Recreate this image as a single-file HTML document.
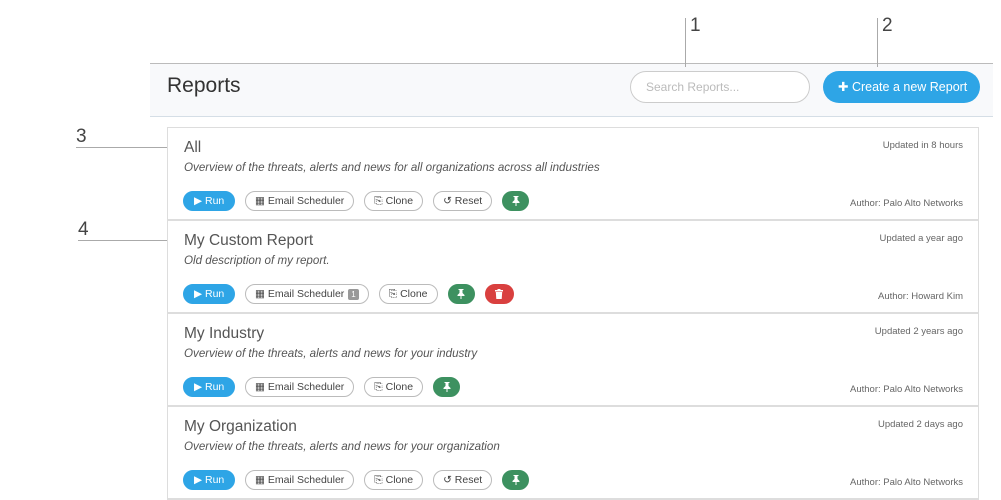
<!DOCTYPE html>
<html><head><style>
*{box-sizing:border-box;margin:0;padding:0}
body{width:1001px;height:497px;background:#fff;font-family:"Liberation Sans",sans-serif;position:relative;overflow:hidden;color:#555}
.a{position:absolute}
.hdr{left:150px;top:63px;width:843px;height:54px;background:#f8f9fb;border-top:1px solid #bbb;border-bottom:1px solid #d5dee6}
.card{left:167px;width:812px;height:94px;border:1px solid #ddd;border-bottom:2px solid #ddd;background:#fff}
.t{left:16px;top:11px;font-size:15.5px;color:#555}
.d{left:16px;top:33px;font-size:11.6px;font-style:italic;color:#555}
.u{right:15px;top:12px;font-size:9.5px;color:#666}
.au{right:15px;top:70px;font-size:9.5px;color:#666}
.btns{left:15px;top:63px;display:flex;gap:10px}
.b{height:20px;border-radius:10px;border:1px solid #bbb;font-size:10.5px;line-height:18px;padding:0 9px;color:#444;background:#fff;white-space:nowrap}
.run{background:#2ea5e6;border-color:#2ea5e6;color:#fff;width:52px;padding:0 0 0 10px}
.pin{background:#3d9160;border-color:#3d9160;width:27px;text-align:center;padding:0}
.del{background:#d9403f;border-color:#d9403f;width:29px;text-align:center;padding:0}
.pin svg,.del svg{margin-top:4px}
.badge{display:inline-block;background:#999;color:#fff;font-size:8px;line-height:11px;padding:0 3px;border-radius:2px;margin-left:4px}
.ln{background:#aaa}
.num{font-size:19px;color:#444}
</style></head><body>
<div class="a hdr"></div>
<div class="a" style="left:167px;top:74px;font-size:21px;color:#333">Reports</div>
<div class="a" style="left:630px;top:71px;width:180px;height:32px;border:1px solid #ccc;border-radius:16px;background:#fff;font-size:12px;color:#bbb;padding:8px 0 0 15px">Search Reports...</div>
<div class="a" style="left:823px;top:71px;width:157px;height:32px;border-radius:16px;background:#2ea5e6;color:#fff;font-size:12.5px;padding:8px 0 0 15px">✚ Create a new Report</div>
<div class="a ln" style="left:685px;top:18px;width:1px;height:49px"></div>
<div class="a num" style="left:690px;top:15px">1</div>
<div class="a ln" style="left:877px;top:18px;width:1px;height:49px"></div>
<div class="a num" style="left:882px;top:15px">2</div>
<div class="a num" style="left:76px;top:126px">3</div>
<div class="a ln" style="left:76px;top:147px;width:105px;height:1px"></div>
<div class="a num" style="left:78px;top:219px">4</div>
<div class="a ln" style="left:78px;top:240px;width:103px;height:1px"></div>

<div class="a card" style="top:127px">
<div class="a t">All</div><div class="a d">Overview of the threats, alerts and news for all organizations across all industries</div>
<div class="a u">Updated in 8 hours</div><div class="a au">Author: Palo Alto Networks</div>
<div class="a btns"><div class="b run">▶ Run</div><div class="b">▦ Email Scheduler</div><div class="b">⎘ Clone</div><div class="b">↺ Reset</div><div class="b pin"><svg width="8" height="10" viewBox="0 0 8 10"><path d="M1.5 0h5v1h-1v3l2 2v1h-3v3h-1v-3h-3v-1l2-2v-3h-1z" fill="#fff"/></svg></div></div>
</div>
<div class="a card" style="top:220px">
<div class="a t">My Custom Report</div><div class="a d">Old description of my report.</div>
<div class="a u">Updated a year ago</div><div class="a au">Author: Howard Kim</div>
<div class="a btns"><div class="b run">▶ Run</div><div class="b">▦ Email Scheduler<span class="badge">1</span></div><div class="b">⎘ Clone</div><div class="b pin"><svg width="8" height="10" viewBox="0 0 8 10"><path d="M1.5 0h5v1h-1v3l2 2v1h-3v3h-1v-3h-3v-1l2-2v-3h-1z" fill="#fff"/></svg></div><div class="b del"><svg width="8" height="10" viewBox="0 0 8 10"><path d="M0 1h2.5v-1h3v1h2.5v1.5h-8zM0.8 3h6.4l-.5 7h-5.4z" fill="#fff"/></svg></div></div>
</div>
<div class="a card" style="top:313px">
<div class="a t">My Industry</div><div class="a d">Overview of the threats, alerts and news for your industry</div>
<div class="a u">Updated 2 years ago</div><div class="a au">Author: Palo Alto Networks</div>
<div class="a btns"><div class="b run">▶ Run</div><div class="b">▦ Email Scheduler</div><div class="b">⎘ Clone</div><div class="b pin"><svg width="8" height="10" viewBox="0 0 8 10"><path d="M1.5 0h5v1h-1v3l2 2v1h-3v3h-1v-3h-3v-1l2-2v-3h-1z" fill="#fff"/></svg></div></div>
</div>
<div class="a card" style="top:406px">
<div class="a t">My Organization</div><div class="a d">Overview of the threats, alerts and news for your organization</div>
<div class="a u">Updated 2 days ago</div><div class="a au">Author: Palo Alto Networks</div>
<div class="a btns"><div class="b run">▶ Run</div><div class="b">▦ Email Scheduler</div><div class="b">⎘ Clone</div><div class="b">↺ Reset</div><div class="b pin"><svg width="8" height="10" viewBox="0 0 8 10"><path d="M1.5 0h5v1h-1v3l2 2v1h-3v3h-1v-3h-3v-1l2-2v-3h-1z" fill="#fff"/></svg></div></div>
</div>
</body></html>
